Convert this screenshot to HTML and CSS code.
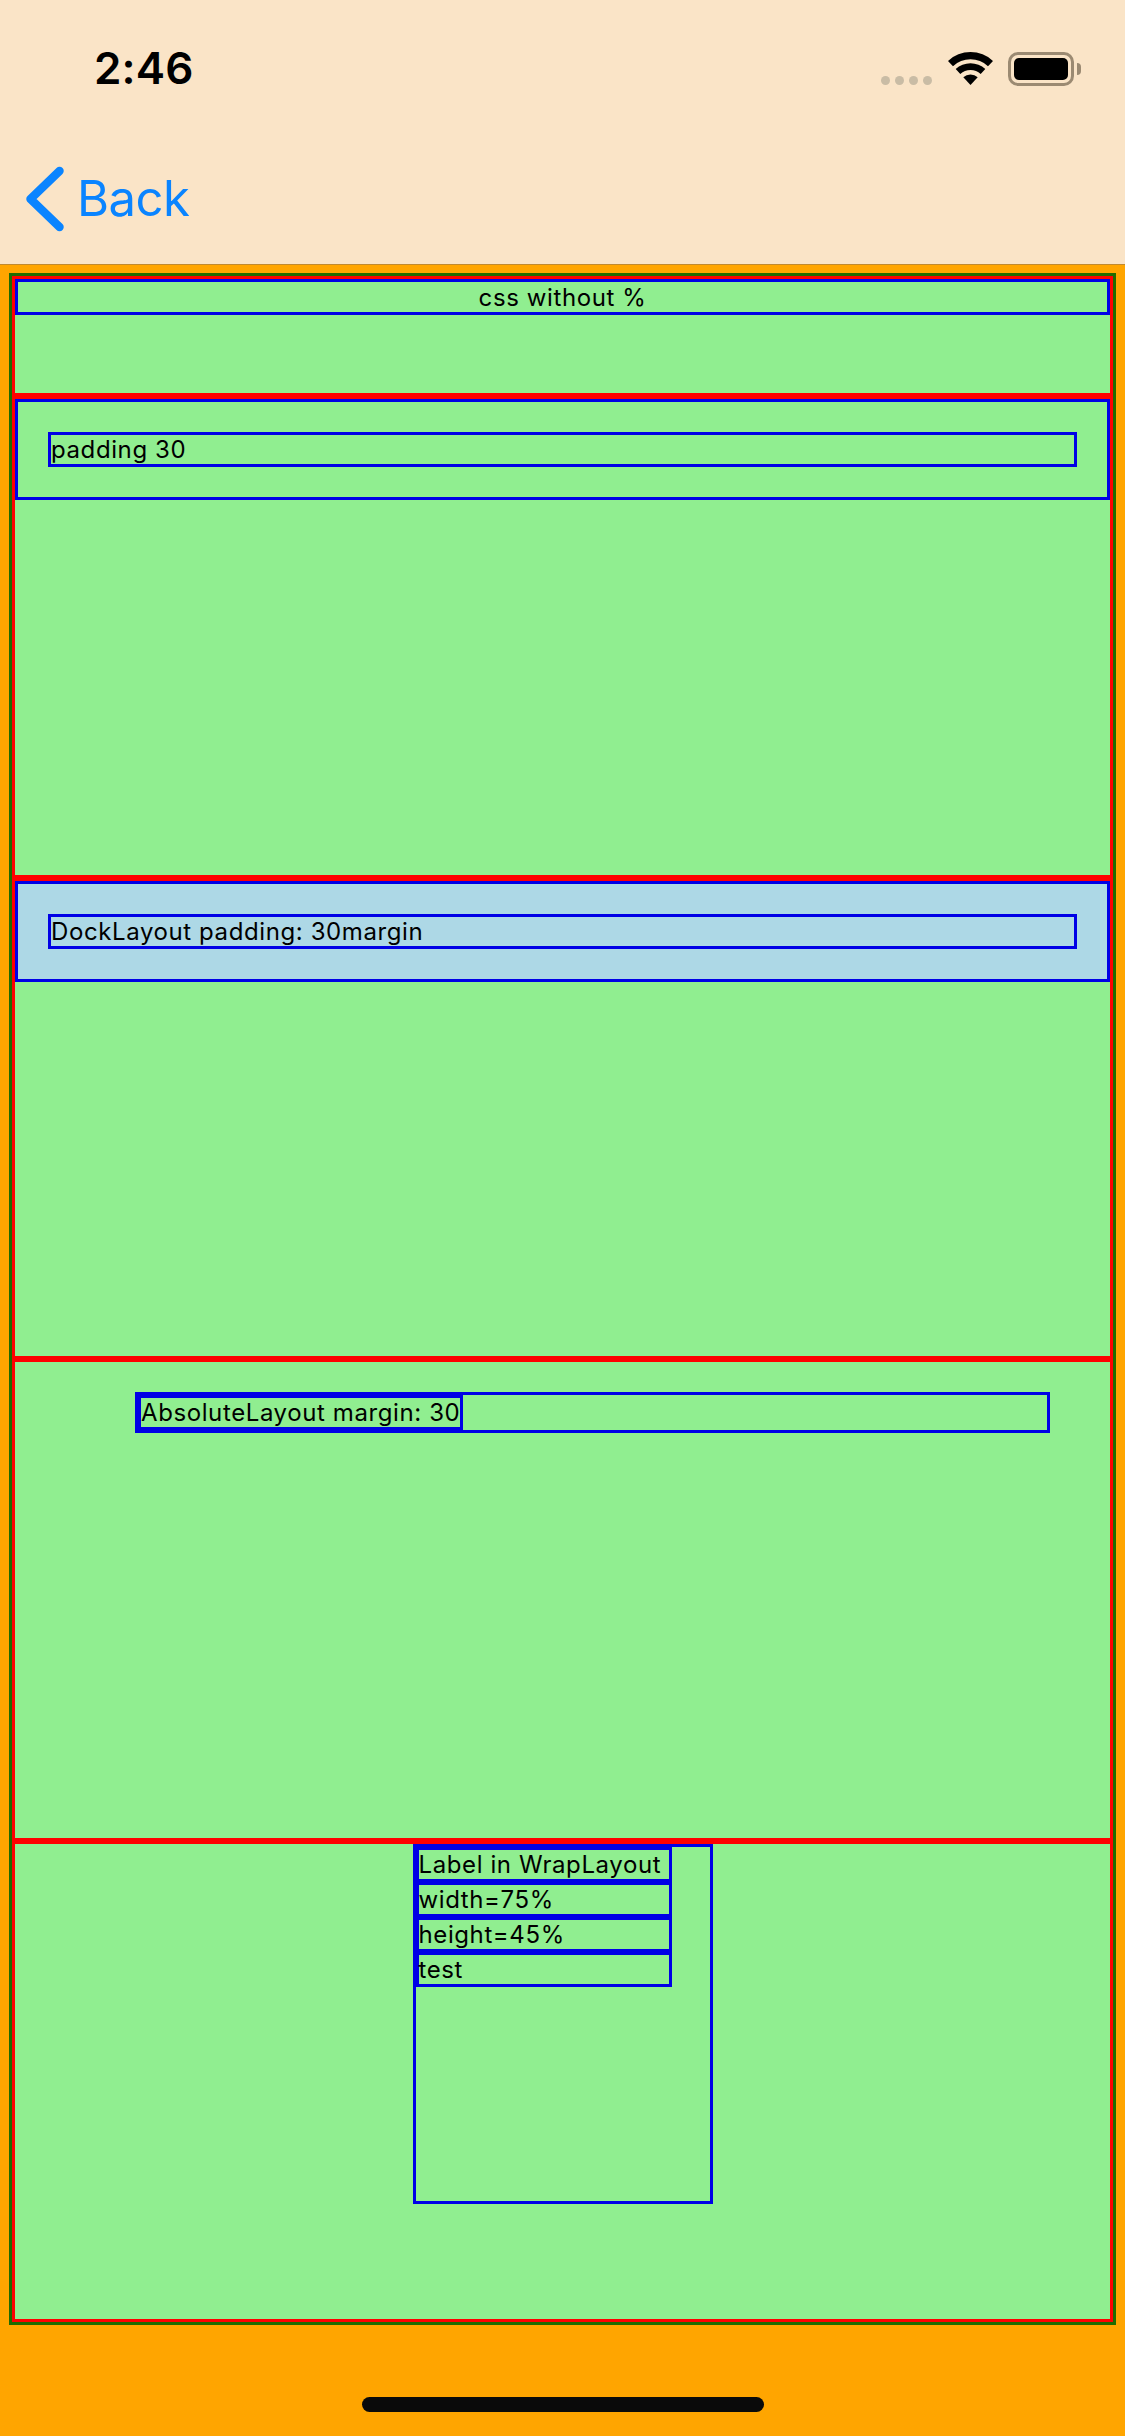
FILE: index.html
```html
<!DOCTYPE HTML>
<html lang="en">
  <head>
    <title>Percent layouts</title>
    <meta charset="utf-8">
    <link rel="stylesheet" href="styles.css">
  </head>
  <body>

  <div class="nav">
    <div class="status">
      <span class="time">2:46</span>
      <div class="status-icons">
        <div class="signal">
          <span class="dot"></span>
          <span class="dot"></span>
          <span class="dot"></span>
          <span class="dot"></span>
        </div>
        <svg class="wifi" width="45" height="33" viewBox="0 0 45 33">
          <path d="M0 8.9A33 33 0 0 1 45 8.9L40 14.2A25.7 25.7 0 0 0 5 14.2Z"/>
          <path d="M7.7 17.1A21.7 21.7 0 0 1 37.3 17.1L32.7 22A15 15 0 0 0 12.3 22Z"/>
          <path d="M15.3 25.3A10.5 10.5 0 0 1 29.7 25.3L22.5 33Z"/>
        </svg>
        <div class="battery">
          <div class="battery-level"></div>
        </div>
        <span class="battery-nub"></span>
      </div>
    </div>
    <div class="back">
      <svg class="chevron" width="38" height="66" viewBox="0 0 38 66">
        <polyline points="33.5,5 4.5,33 33.5,61"/>
      </svg>
      <span class="back-text">Back</span>
    </div>
  </div>

  <div class="main">
    <div class="page">
      <div class="section">
        <div class="label first">css without %</div>
      </div>
      <div class="section">
        <div class="dock">
          <div class="label">padding 30</div>
        </div>
      </div>
      <div class="section">
        <div class="dock blue">
          <div class="label">DockLayout padding: 30margin</div>
        </div>
      </div>
      <div class="section">
        <div class="abs">
          <div class="label fit">AbsoluteLayout margin: 30</div>
        </div>
      </div>
      <div class="section">
        <div class="wrap">
          <div class="label">Label in WrapLayout</div>
          <div class="label">width=75%</div>
          <div class="label">height=45%</div>
          <div class="label">test</div>
        </div>
      </div>
    </div>
    <div class="home"></div>
  </div>

  </body>
</html>
```

FILE: styles.css
```css
html {
  height: 100%;
}
body {
  margin: 0;
  padding: 0;
  height: 2436px;
  display: flex;
  flex-direction: column;
  font-family: Inter, "Liberation Sans", sans-serif;
  color: #000000;
  background: #ffa500;
}

.nav {
  height: 264px;
  flex: none;
  background: #fae4c7;
  border-bottom: 1px solid #c08a30;
}

.status {
  display: flex;
  justify-content: space-between;
  align-items: flex-start;
  height: 166px;
  box-sizing: border-box;
  padding: 46px 44px 0 94px;
}

.time {
  font-size: 44px;
  font-weight: 600;
  line-height: 44px;
  letter-spacing: 0.2px;
}

.status-icons {
  display: flex;
  align-items: flex-start;
  margin-top: 6px;
}

.signal {
  display: flex;
  gap: 5px;
  margin: 24px 16px 0 0;
}

.dot {
  width: 9px;
  height: 9px;
  border-radius: 50%;
  background: #c9bca5;
}

.wifi {
  display: block;
  margin-right: 15px;
}

.battery {
  width: 66px;
  height: 34px;
  box-sizing: border-box;
  border: 3px solid #9b8a72;
  border-radius: 10px;
  padding: 3px;
}

.battery-level {
  height: 100%;
  background: #000000;
  border-radius: 5px;
}

.battery-nub {
  width: 4px;
  height: 12px;
  margin: 11px 0 0 3px;
  background: #9b8a72;
  border-radius: 0 6px 6px 0;
}

.back {
  display: flex;
  align-items: center;
  padding-left: 26px;
  height: 66px;
}

.chevron {
  display: block;
  margin-right: 13px;
}

.chevron polyline {
  fill: none;
  stroke: #0a84ff;
  stroke-width: 8.5;
  stroke-linecap: round;
  stroke-linejoin: round;
}

.back-text {
  font-size: 49px;
  color: #0a84ff;
  line-height: 66px;
  letter-spacing: -0.5px;
}

.main {
  flex: 1;
  display: flex;
  flex-direction: column;
  align-items: center;
  padding: 8px 9px 24px;
  min-height: 0;
}

.page {
  flex: 1;
  align-self: stretch;
  display: grid;
  grid-template-rows: 120px repeat(4, 1fr);
  border: 3px solid #1f6b00;
  min-height: 0;
  margin-bottom: 72px;
}

.section {
  border: 3px solid #ff0000;
  background: #90ee90;
  min-height: 0;
}

.label {
  height: 35px;
  box-sizing: border-box;
  border: 3px solid #0000e6;
  font-size: 24px;
  line-height: 29px;
  letter-spacing: 0.6px;
  white-space: nowrap;
}

.label.first {
  height: 36px;
  line-height: 31px;
  text-align: center;
}

.label.fit {
  width: fit-content;
}

.dock {
  border: 3px solid #0000e6;
  padding: 30px;
}

.dock.blue {
  background: #add8e6;
}

.abs {
  width: 915px;
  box-sizing: border-box;
  border: 3px solid #0000e6;
  margin: 30px 0 0 120px;
}

.wrap {
  width: 300px;
  height: 360px;
  box-sizing: border-box;
  border: 3px solid #0000e6;
  margin: 0 auto;
}

.wrap .label {
  width: 256px;
}

.home {
  width: 402px;
  height: 15px;
  flex: none;
  border-radius: 8px;
  background: #0a0a0a;
}
```
